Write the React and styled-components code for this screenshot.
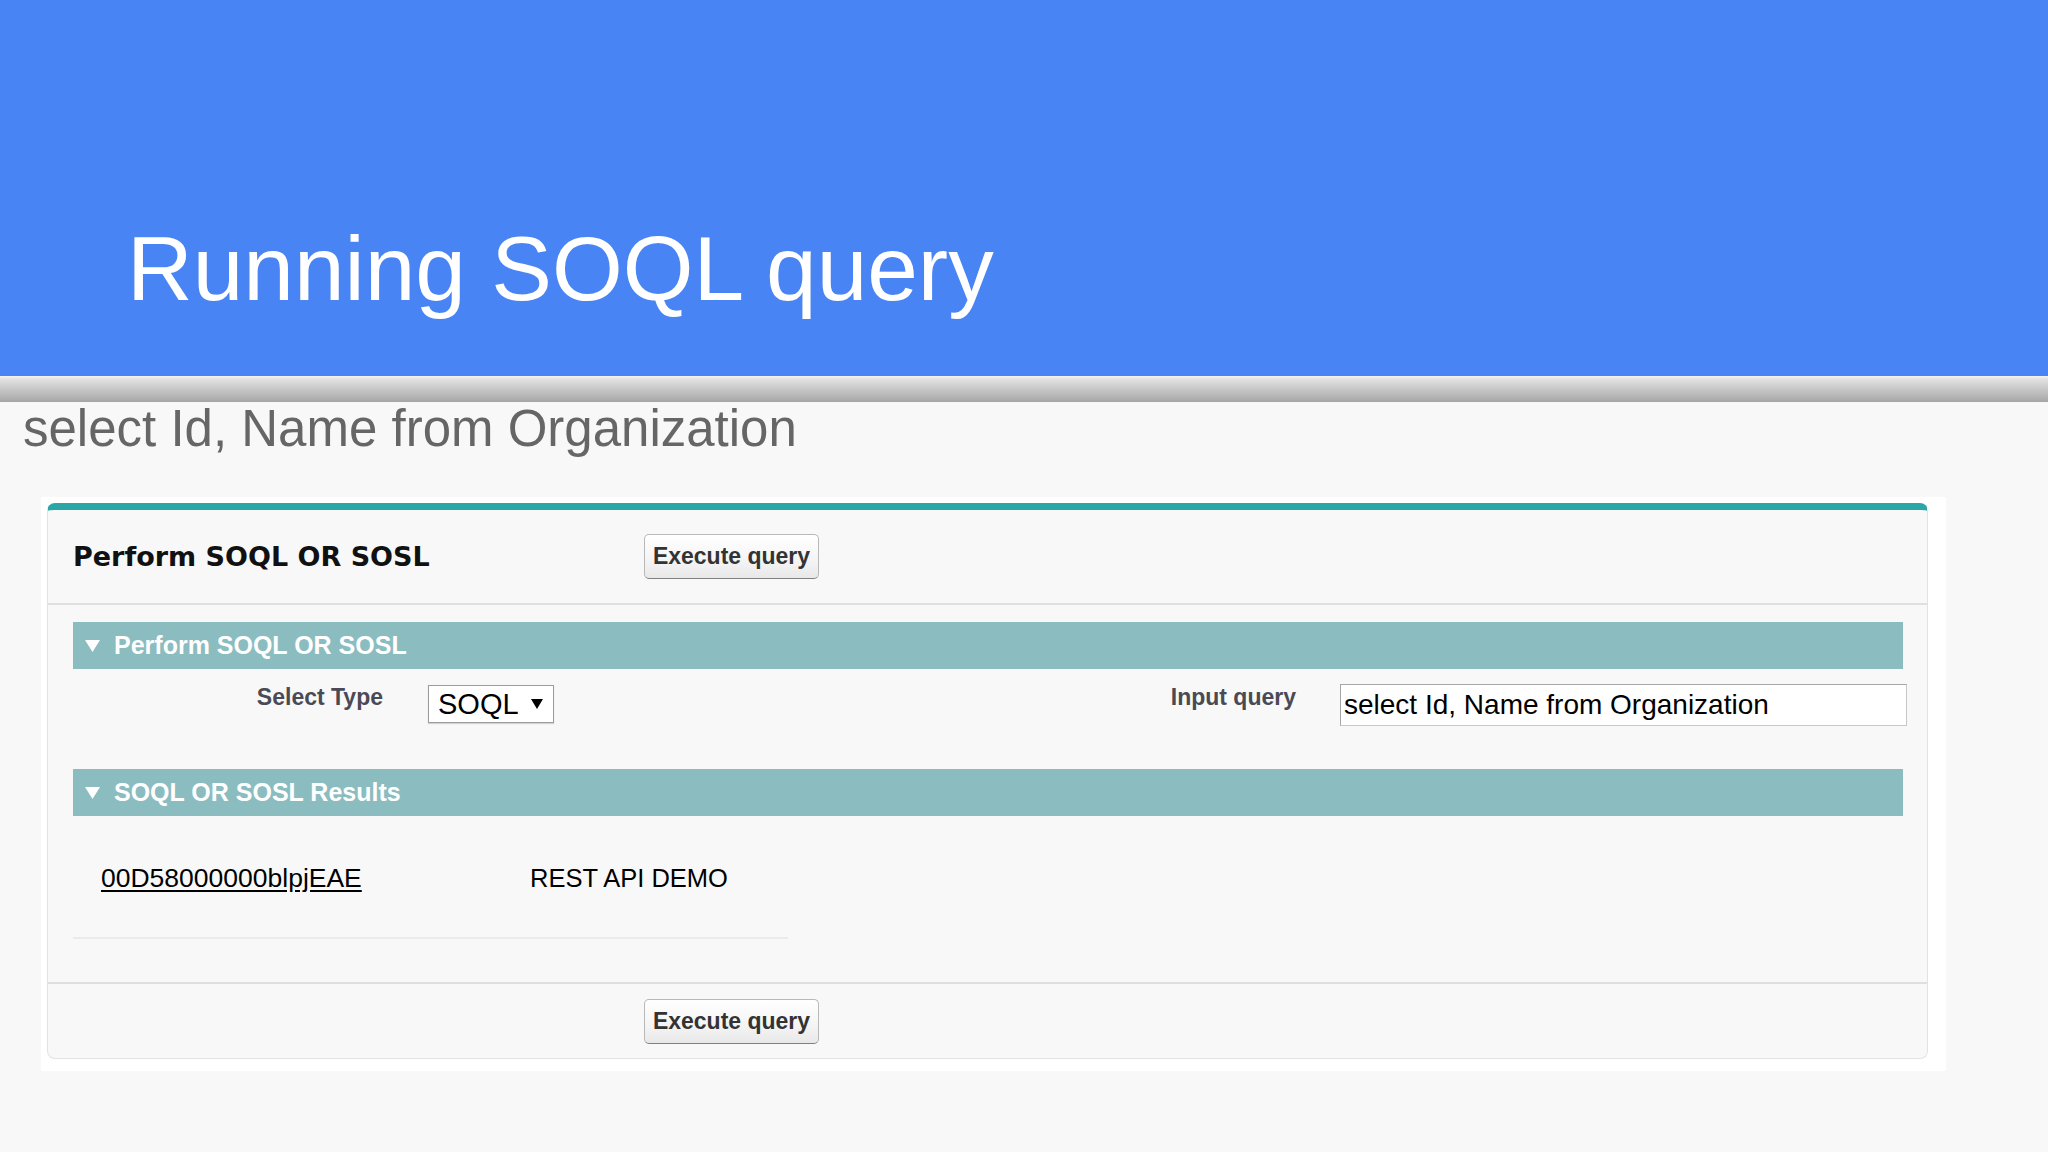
import React from "react";
import styled, { createGlobalStyle } from "styled-components";

const GlobalStyle = createGlobalStyle`
  html, body {
    margin: 0;
    padding: 0;
    background: #f8f8f9;
  }
  * {
    box-sizing: border-box;
  }
`;

const Slide = styled.div`
  width: 2048px;
  min-height: 1152px;
  display: flex;
  flex-direction: column;
  background: #f8f8f9;
  font-family: "Liberation Sans", Arial, sans-serif;
`;

const TitleBar = styled.div`
  height: 376px;
  background: #4884f3;
  padding: 223px 0 0 127px;
`;

const Title = styled.h1`
  margin: 0;
  font-family: "Liberation Sans", Arial, sans-serif;
  font-weight: 400;
  font-size: 91px;
  line-height: 91px;
  color: #fff;
`;

const ShadeBar = styled.div`
  height: 26px;
  background: linear-gradient(#f4f4f4 0%, #e2e2e2 12%, #c4c4c4 55%, #a6a6a6 100%);
`;

const Subtitle = styled.p`
  margin: 1px 0 0 23px;
  font-size: 51px;
  line-height: 51px;
  color: #666;
`;

const ShotFrame = styled.div`
  margin: 43px 0 0 41px;
  width: 1905px;
  background: #fff;
  padding: 6px 18px 12px 6px;
`;

const Panel = styled.div`
  background: #f8f8f8;
  border: 1px solid #e2e2e2;
  border-top: 7px solid #2aa6a6;
  border-radius: 8px;
`;

const PanelRow = styled.div`
  display: flex;
  align-items: center;
  height: ${(p) => p.$height}px;
  border-${(p) => p.$border}: 2px solid #dfdfdf;
`;

const PanelTitleCell = styled.div`
  flex: 0 0 596px;
  padding-left: 25px;
`;

const PanelTitle = styled.h2`
  margin: 0;
  font-family: "DejaVu Sans", Verdana, sans-serif;
  font-weight: 700;
  font-size: 27px;
  color: #111;
`;

const Button = styled.button`
  width: 175px;
  height: 45px;
  padding: 0;
  font-family: "Liberation Sans", Arial, sans-serif;
  font-weight: 700;
  font-size: 23px;
  color: #333;
  background: linear-gradient(#ffffff, #f4f4f4 60%, #e8e8e8);
  border: 1px solid #b8b8b8;
  border-bottom-color: #808080;
  border-radius: 5px;
`;

const PanelBody = styled.div`
  padding: 17px 24px 43px 25px;
`;

const SectionBar = styled.div`
  display: flex;
  align-items: center;
  height: 47px;
  margin-top: ${(p) => p.$top || 0}px;
  padding-left: 12px;
  background: #8bbcbf;
  color: #fff;
  font-weight: 700;
  font-size: 25px;
`;

const Caret = styled.svg`
  width: 15px;
  height: 12px;
  margin-right: 14px;
  flex: none;
`;

const FieldGrid = styled.div`
  display: grid;
  grid-template-columns: 332px 582px 331px 1fr;
  align-items: start;
  margin-top: 15px;
  height: 42px;
`;

const Label = styled.div`
  text-align: right;
  padding-right: 22px;
  font-weight: 700;
  font-size: 23px;
  line-height: 27px;
  color: #4a4a56;
`;

const Data = styled.div`
  padding-left: ${(p) => p.$pad}px;
  padding-top: ${(p) => p.$top || 0}px;
`;

const SelectBox = styled.div`
  display: flex;
  align-items: center;
  width: 126px;
  height: 38px;
  padding-left: 9px;
  background: #fff;
  border: 1px solid #9c9c9c;
  box-shadow: 0 1px 1px rgba(0, 0, 0, 0.15);
  font-size: 29px;
  color: #000;
`;

const SelectArrow = styled.svg`
  width: 12px;
  height: 10px;
  margin-left: 12px;
`;

const QueryField = styled.div`
  width: 567px;
  height: 42px;
  padding-left: 3px;
  background: #fff;
  border: 1px solid #a6a6a6;
  border-right-color: #c8c8c8;
  border-bottom-color: #c8c8c8;
  font-size: 28px;
  line-height: 40px;
  color: #000;
  white-space: nowrap;
`;

const ResultTable = styled.div`
  width: 715px;
  margin-top: 46px;
  padding-bottom: 43px;
  border-bottom: 2px solid #ebebeb;
  display: grid;
  grid-template-columns: 430px 1fr;
  line-height: 32px;
  color: #000;
`;

const ResultCell = styled.div`
  padding-left: ${(p) => p.$pad}px;
  font-size: ${(p) => p.$size}px;
`;

const RecordLink = styled.a`
  color: #000;
  text-decoration: underline;
  text-underline-offset: 3px;
`;

function Section({ title, top }) {
  return (
    <SectionBar $top={top}>
      <Caret viewBox="0 0 15 12">
        <polygon points="0,0 15,0 7.5,12" fill="#fff" />
      </Caret>
      {title}
    </SectionBar>
  );
}

export default function App() {
  return (
    <Slide>
      <GlobalStyle />
      <TitleBar>
        <Title>Running SOQL query</Title>
      </TitleBar>
      <ShadeBar />
      <Subtitle>select Id, Name from Organization</Subtitle>
      <ShotFrame>
        <Panel>
          <PanelRow $height={95} $border="bottom">
            <PanelTitleCell>
              <PanelTitle>Perform SOQL OR SOSL</PanelTitle>
            </PanelTitleCell>
            <Button>Execute query</Button>
          </PanelRow>
          <PanelBody>
            <Section title="Perform SOQL OR SOSL" />
            <FieldGrid>
              <Label>Select Type</Label>
              <Data $pad={23} $top={1}>
                <SelectBox>
                  SOQL
                  <SelectArrow viewBox="0 0 12 10">
                    <polygon points="0,0 12,0 6,10" fill="#000" />
                  </SelectArrow>
                </SelectBox>
              </Data>
              <Label>Input query</Label>
              <Data $pad={22}>
                <QueryField>select Id, Name from Organization</QueryField>
              </Data>
            </FieldGrid>
            <Section title="SOQL OR SOSL Results" top={43} />
            <ResultTable>
              <ResultCell $pad={28} $size={26.5}>
                <RecordLink href="#">00D58000000blpjEAE</RecordLink>
              </ResultCell>
              <ResultCell $pad={27} $size={25.5}>REST API DEMO</ResultCell>
            </ResultTable>
          </PanelBody>
          <PanelRow $height={76} $border="top">
            <PanelTitleCell />
            <Button>Execute query</Button>
          </PanelRow>
        </Panel>
      </ShotFrame>
    </Slide>
  );
}
